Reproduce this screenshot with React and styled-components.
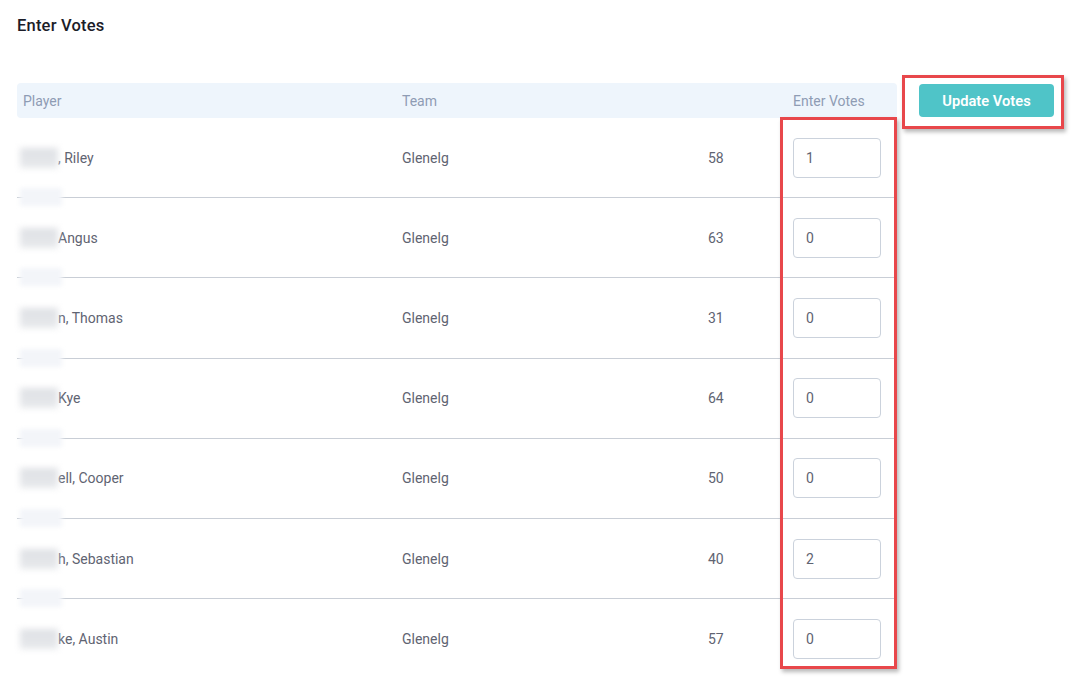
import React from "react";
import styled, { createGlobalStyle } from "styled-components";

const Global = createGlobalStyle`
  html, body { margin: 0; padding: 0; background: #ffffff; }
  body { font-family: "Roboto", "Liberation Sans", sans-serif; }
  * { box-sizing: border-box; }
`;

const Page = styled.div`
  position: relative;
  width: 1074px;
  height: 678px;
  overflow: hidden;
  padding: 16px 0 0 17px;
`;

const Title = styled.h2`
  margin: 0 0 47px;
  font-size: 16.5px;
  line-height: 20px;
  font-weight: 500;
  color: #1c1d29;
  letter-spacing: 0.2px;
`;

const Content = styled.div`
  display: flex;
  align-items: flex-start;
  gap: 22px;
`;

const Table = styled.div`
  width: 880px;
  display: flex;
  flex-direction: column;
`;

const cols = "379px 306px 85px 1fr";

const HeaderRow = styled.div`
  display: grid;
  grid-template-columns: ${cols};
  align-items: center;
  height: 35px;
  background: #eef5fc;
  border-radius: 4px;
`;

const HeadCell = styled.div`
  padding-left: 6px;
  font-size: 14px;
  color: #8e9cb4;
`;

const Row = styled.div`
  position: relative;
  display: grid;
  grid-template-columns: ${cols};
  align-items: center;
  height: 80.2px;
  border-bottom: ${(p) => (p.$last ? "none" : "1px solid #c9ced6")};
`;

const Cell = styled.div`
  padding-left: 6px;
  font-size: 14px;
  color: #5f6472;
  display: flex;
  align-items: center;
`;

const Redact = styled.span`
  display: inline-block;
  width: 38px;
  height: 20px;
  margin-left: -3px;
  background: linear-gradient(#dfe1e5, #e7e9ec);
  filter: blur(3px);
  flex: none;
`;

const LineBlur = styled.span`
  position: absolute;
  left: 3px;
  bottom: -9px;
  width: 42px;
  height: 18px;
  background: #f3f5f9;
  filter: blur(2px);
`;

const VoteInput = styled.input`
  width: 88px;
  height: 40px;
  border: 1px solid #cbd2dc;
  border-radius: 4px;
  padding: 0 0 0 12px;
  font-family: "Roboto", "Liberation Sans", sans-serif;
  font-size: 14px;
  color: #5f6472;
  background: #fff;
  outline: none;
`;

const UpdateButton = styled.button`
  margin-top: 1px;
  width: 135px;
  height: 33px;
  border: none;
  border-radius: 4px;
  background: #4fc4c8;
  color: #ffffff;
  font-family: "Roboto", "Liberation Sans", sans-serif;
  font-size: 14.7px;
  font-weight: 600;
  cursor: pointer;
`;

const Annotation = styled.div`
  position: absolute;
  left: ${(p) => p.$x}px;
  top: ${(p) => p.$y}px;
  width: ${(p) => p.$w}px;
  height: ${(p) => p.$h}px;
  border: 3px solid #e8474b;
  box-shadow: 2px 3px 4px rgba(0, 0, 0, 0.28);
  pointer-events: none;
`;

const players = [
  { name: ", Riley", num: 58, votes: 1 },
  { name: "Angus", num: 63, votes: 0 },
  { name: "n, Thomas", num: 31, votes: 0 },
  { name: "Kye", num: 64, votes: 0 },
  { name: "ell, Cooper", num: 50, votes: 0 },
  { name: "h, Sebastian", num: 40, votes: 2 },
  { name: "ke, Austin", num: 57, votes: 0 },
];

export default function App() {
  return (
    <>
      <Global />
      <Page>
        <Title>Enter Votes</Title>
        <Content>
          <Table>
            <HeaderRow>
              <HeadCell>Player</HeadCell>
              <HeadCell>Team</HeadCell>
              <HeadCell />
              <HeadCell>Enter Votes</HeadCell>
            </HeaderRow>
            {players.map((p, i) => (
              <Row key={i} $last={i === players.length - 1}>
                <Cell>
                  <Redact aria-hidden="true" />
                  {p.name}
                </Cell>
                <Cell>Glenelg</Cell>
                <Cell>{p.num}</Cell>
                <Cell>
                  <VoteInput defaultValue={p.votes} />
                </Cell>
                {i < players.length - 1 && <LineBlur />}
              </Row>
            ))}
          </Table>
          <UpdateButton>Update Votes</UpdateButton>
        </Content>
        <Annotation $x={780} $y={117} $w={117} $h={552} />
        <Annotation $x={902} $y={75} $w={162} $h={54} />
      </Page>
    </>
  );
}
